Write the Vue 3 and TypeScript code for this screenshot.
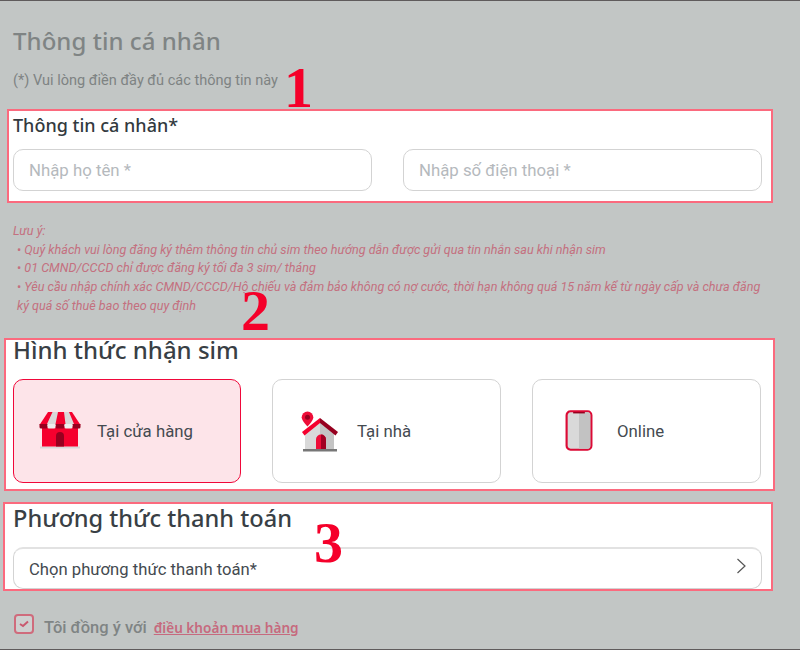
<script setup lang="ts">
const notes: string[] = [
  'Quý khách vui lòng đăng ký thêm thông tin chủ sim theo hướng dẫn được gửi qua tin nhắn sau khi nhận sim',
  '01 CMND/CCCD chỉ được đăng ký tối đa 3 sim/ tháng',
  'Yêu cầu nhập chính xác CMND/CCCD/Hộ chiếu và đảm bảo không có nợ cước, thời hạn không quá 15 năm kể từ ngày cấp và chưa đăng ký quá số thuê bao theo quy định',
]
</script>

<template>
  <div class="page">
    <h1 class="title">Thông tin cá nhân</h1>
    <p class="sub">(*) Vui lòng điền đầy đủ các thông tin này</p>

    <section class="box box-one">
      <h2 class="label">Thông tin cá nhân*</h2>
      <div class="inputs">
        <div class="field">Nhập họ tên *</div>
        <div class="field">Nhập số điện thoại *</div>
      </div>
    </section>

    <div class="notes">
      <p>Lưu ý:</p>
      <p v-for="n in notes" :key="n" class="note-item"><span class="dot">•</span> {{ n }}</p>
    </div>

    <section class="box box-two">
      <h2 class="heading sim">Hình thức nhận sim</h2>
      <div class="cards">
        <div class="card active">
          <svg class="icon store" width="42" height="37" viewBox="0 0 42 37">
            <rect x="1" y="34.500" width="40" height="2" fill="#d9d9d9" />
            <rect x="3" y="14" width="36" height="20.500" fill="#f5002e" />
            <path d="M17 34.500V24a4 4 0 0 1 8 0v10.500z" fill="#96001f" />
            <path d="M9 0h24l8.500 13H.5z" fill="#f5002e" />
            <path d="M13.500 0H19l-2.500 12H8zM25 0h5l5 12H26.500z" fill="#d9d9d9" />
            <path d="M.5 12h8v3a1.500 1.500 0 0 1-1.500 1.500H2A1.500 1.500 0 0 1 .5 15zM16.500 12h9v3a1.500 1.500 0 0 1-1.500 1.500H18a1.500 1.500 0 0 1-1.500-1.500zM33.500 12h8v3a1.500 1.500 0 0 1-1.500 1.500H35a1.500 1.500 0 0 1-1.500-1.500z" fill="#96001f" />
            <path d="M8.500 12h8v3a1.500 1.500 0 0 1-1.500 1.500H10A1.500 1.500 0 0 1 8.500 15zM25.500 12h8v3a1.500 1.500 0 0 1-1.500 1.500H27a1.500 1.500 0 0 1-1.500-1.500z" fill="#eeeeee" />
          </svg>
          <span>Tại cửa hàng</span>
        </div>
        <div class="card">
          <svg class="icon house" width="38" height="42" viewBox="0 0 38 42">
            <path d="M6.500 1.500a5.800 5.800 0 0 1 5.800 5.800c0 3.700-5.800 9.200-5.800 9.200S.7 11 .7 7.300A5.800 5.800 0 0 1 6.500 1.500z" fill="#ee0d38" />
            <circle cx="6.500" cy="7.300" r="2.500" fill="#96001f" />
            <path d="M19 12 33 23v16H4V23z" fill="#d9d9d9" />
            <path d="M19 12 33 23v16H19z" fill="#c4c4c4" />
            <path d="M15 39V29.500a5 5 0 0 1 10 0V39z" fill="#ee0d38" />
            <path d="M20 39V24.500a5 5 0 0 1 5 5V39z" fill="#a10022" />
            <path d="M1 22 19 8v5L3.500 25.500z" fill="#f5002e" />
            <path d="M37 22 19 8v5l15.500 12.500z" fill="#96001f" />
            <rect x="2" y="39" width="34" height="2.500" fill="#777" />
          </svg>
          <span>Tại nhà</span>
        </div>
        <div class="card">
          <svg class="icon phone" width="28" height="41" viewBox="0 0 28 42">
            <rect x="1.300" y="1.300" width="25.400" height="39.400" rx="4" fill="#d9d9d9" stroke="#dc0a35" stroke-width="2.200" />
            <path d="M14 2.400h9.500A2.500 2.500 0 0 1 25.600 5v32a2.500 2.500 0 0 1-2.500 2.600H14z" fill="#c2c2c2" />
            <path d="M8 2h12v1.500H8z" fill="#96001f" />
          </svg>
          <span>Online</span>
        </div>
      </div>
    </section>

    <section class="box box-three">
      <h2 class="heading pay">Phương thức thanh toán</h2>
      <div class="select">
        <span>Chọn phương thức thanh toán*</span>
        <svg width="11" height="16" viewBox="0 0 11 16">
          <path d="M1.500 1 9 8l-7.500 7" fill="none" stroke="#555" stroke-width="1.200" />
        </svg>
      </div>
    </section>

    <div class="agree">
      <span class="check">
        <svg width="12" height="10" viewBox="0 0 12 10">
          <path d="M2 5l3 2L10 2.500" fill="none" stroke="#c9596f" stroke-width="2" />
        </svg>
      </span>
      <span class="agree-text">Tôi đồng ý với</span>
      <a class="terms">điều khoản mua hàng</a>
    </div>

    <span class="num n1">1</span>
    <span class="num n2">2</span>
    <span class="num n3">3</span>
  </div>
</template>

<style>
html,
body {
  margin: 0;
  background: #c2c6c5;
}
</style>

<style scoped>
.page {
  position: relative;
  box-sizing: border-box;
  width: 800px;
  height: 650px;
  overflow: hidden;
  background: #c2c6c5;
  border-top: 1px solid #5f5b5c;
  border-bottom: 1px solid #5f5b5c;
  font-family: Roboto, sans-serif;
}
h1,
h2,
p {
  margin: 0;
}
.title {
  margin: 24px 0 0 13px;
  font: 500 24px/32px "Noto Sans", sans-serif;
  letter-spacing: 0.05px;
  color: #7f8484;
}
.sub {
  margin: 15px 0 0 13px;
  font-size: 14.550px;
  line-height: 18px;
  color: #7e8383;
}
.box {
  box-sizing: border-box;
  background: #fff;
  border: 2px solid #fb6a7e;
}
.box-one {
  width: 766px;
  height: 94px;
  margin: 19px 0 0 7px;
  padding: 2px 9px 0 4px;
}
.label {
  font: 500 18px/24px "Noto Sans", sans-serif;
  color: #333a40;
}
.inputs {
  display: flex;
  gap: 31px;
  margin-top: 12px;
}
.field {
  box-sizing: border-box;
  width: 359px;
  height: 42px;
  padding-left: 15px;
  border: 1px solid #d3d3d3;
  border-radius: 10px;
  font-size: 16.800px;
  line-height: 40px;
  color: #b5b9bd;
}
.notes {
  width: 750px;
  margin: 19px 0 0 13px;
  font-size: 12.600px;
  font-style: italic;
  line-height: 18.700px;
  color: #c4707f;
}
.note-item {
  padding-left: 4px;
}
.dot {
  font-style: normal;
}
.box-two {
  width: 771px;
  height: 153px;
  margin: 22px 0 0 4px;
  padding: 0 12px 0 7px;
}
.heading {
  font: 500 24px/24px "Noto Sans", sans-serif;
  color: #393f45;
}
.heading.sim {
  margin-top: -2px;
}
.heading.pay {
  font-size: 23.600px;
}
.cards {
  display: flex;
  justify-content: space-between;
  margin-top: 17px;
}
.card {
  box-sizing: border-box;
  display: flex;
  align-items: center;
  width: 229px;
  height: 104px;
  border: 1px solid #d3d3d3;
  border-radius: 10px;
  font-size: 16.800px;
  color: #444a50;
}
.card.active {
  width: 228px;
  background: #fde4e9;
  border-color: #f0083a;
}
.icon {
  flex: none;
}
.icon.store {
  margin: 0 16px 0 25px;
}
.icon.house {
  margin: 0 18px 0 28px;
}
.icon.phone {
  margin: 0 24px 0 32px;
}
.box-three {
  width: 770px;
  height: 89px;
  margin: 11px 0 0 3px;
  padding: 2px 9px 0 8px;
}
.select {
  box-sizing: border-box;
  display: flex;
  align-items: center;
  justify-content: space-between;
  width: 749px;
  height: 42px;
  margin-top: 17px;
  padding: 0 14px 0 15px;
  border: 1px solid #d3d3d3;
  border-top: 2px solid #e2e2e2;
  border-radius: 10px;
  font-size: 16.650px;
  color: #444a50;
}
.select span {
  margin-top: 2px;
}
.select svg {
  margin-top: -5px;
}
.agree {
  display: flex;
  align-items: flex-start;
  margin: 23px 0 0 14px;
}
.check {
  box-sizing: border-box;
  display: flex;
  align-items: center;
  justify-content: center;
  width: 20px;
  height: 20px;
  border: 2px solid #cf6b7c;
  border-radius: 4px;
  background: #ced0d0;
}
.agree-text {
  margin: 4px 0 0 10px;
  font: 500 16.500px/20px Roboto, sans-serif;
  color: #7f8484;
}
.terms {
  margin: 4px 0 0 7px;
  font: 600 13.600px/20px "Noto Sans", sans-serif;
  color: #c66a7e;
  text-decoration: underline;
}
.num {
  position: absolute;
  font: 700 58px/58px "Liberation Serif", serif;
  color: #f5002a;
}
.n1 {
  left: 284px;
  top: 58px;
}
.n2 {
  left: 241px;
  top: 281px;
}
.n3 {
  left: 314px;
  top: 513px;
}
</style>
